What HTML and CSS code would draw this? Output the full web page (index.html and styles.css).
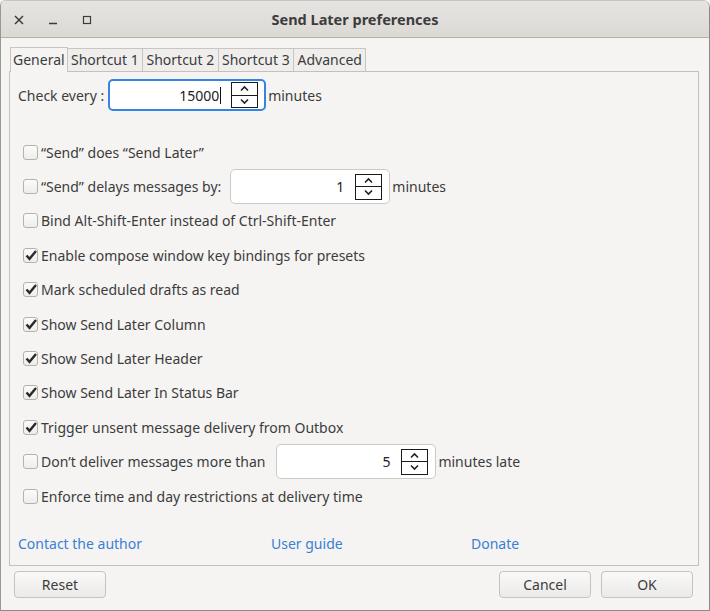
FILE: index.html
```html
<!DOCTYPE html>
<html>
<head>
<meta charset="utf-8">
<link rel="stylesheet" href="styles.css">
</head>
<body>
<div class="window">
  <div class="titlebar">
    <div class="controls">
      <span class="ctl"><svg width="12" height="12" viewBox="0 0 12 12"><path d="M2 2 L10 10 M10 2 L2 10" stroke="#3c3c3c" stroke-width="1.5" fill="none"/></svg></span>
      <span class="ctl"><svg width="12" height="12" viewBox="0 0 12 12"><path d="M2 9.5 H10" stroke="#3c3c3c" stroke-width="1.3" fill="none"/></svg></span>
      <span class="ctl"><svg width="12" height="12" viewBox="0 0 12 12"><rect x="2.5" y="2.5" width="7" height="7" stroke="#3c3c3c" stroke-width="1.2" fill="none"/></svg></span>
    </div>
    <div class="title">Send Later preferences</div>
  </div>
  <div class="body">
    <div class="tabs">
      <div class="tab selected">General</div>
      <div class="tab">Shortcut 1</div>
      <div class="tab">Shortcut 2</div>
      <div class="tab">Shortcut 3</div>
      <div class="tab">Advanced</div>
    </div>
    <div class="panel">
      <div class="check-row">
        <span class="label">Check every :</span>
        <div class="spin focused">
          <span class="value">15000<span class="caret"></span></span>
          <span class="spinbtn"><span class="up"><svg width="11" height="7" viewBox="0 0 11 7"><path d="M2 5.5 L5.5 2 L9 5.5" stroke="#222" stroke-width="1.6" fill="none"/></svg></span><span class="down"><svg width="11" height="7" viewBox="0 0 11 7"><path d="M2 1.5 L5.5 5 L9 1.5" stroke="#222" stroke-width="1.6" fill="none"/></svg></span></span>
        </div>
        <span class="label">minutes</span>
      </div>
      <div class="options">
        <div class="opt"><span class="box"></span><span>“Send” does “Send Later”</span></div>
        <div class="opt"><span class="box"></span><span>“Send” delays messages by:</span>
          <div class="spin small">
            <span class="value">1</span>
            <span class="spinbtn"><span class="up"><svg width="11" height="7" viewBox="0 0 11 7"><path d="M2 5.5 L5.5 2 L9 5.5" stroke="#222" stroke-width="1.6" fill="none"/></svg></span><span class="down"><svg width="11" height="7" viewBox="0 0 11 7"><path d="M2 1.5 L5.5 5 L9 1.5" stroke="#222" stroke-width="1.6" fill="none"/></svg></span></span>
          </div>
          <span>minutes</span>
        </div>
        <div class="opt"><span class="box"></span><span>Bind Alt-Shift-Enter instead of Ctrl-Shift-Enter</span></div>
        <div class="opt"><span class="box checked"><svg width="14" height="13" viewBox="0 0 14 13"><path d="M2.5 6.5 L5.5 9.8 L12 2" stroke="#2a2a2a" stroke-width="2.4" fill="none"/></svg></span><span>Enable compose window key bindings for presets</span></div>
        <div class="opt"><span class="box checked"><svg width="14" height="13" viewBox="0 0 14 13"><path d="M2.5 6.5 L5.5 9.8 L12 2" stroke="#2a2a2a" stroke-width="2.4" fill="none"/></svg></span><span>Mark scheduled drafts as read</span></div>
        <div class="opt"><span class="box checked"><svg width="14" height="13" viewBox="0 0 14 13"><path d="M2.5 6.5 L5.5 9.8 L12 2" stroke="#2a2a2a" stroke-width="2.4" fill="none"/></svg></span><span>Show Send Later Column</span></div>
        <div class="opt"><span class="box checked"><svg width="14" height="13" viewBox="0 0 14 13"><path d="M2.5 6.5 L5.5 9.8 L12 2" stroke="#2a2a2a" stroke-width="2.4" fill="none"/></svg></span><span>Show Send Later Header</span></div>
        <div class="opt"><span class="box checked"><svg width="14" height="13" viewBox="0 0 14 13"><path d="M2.5 6.5 L5.5 9.8 L12 2" stroke="#2a2a2a" stroke-width="2.4" fill="none"/></svg></span><span>Show Send Later In Status Bar</span></div>
        <div class="opt"><span class="box checked"><svg width="14" height="13" viewBox="0 0 14 13"><path d="M2.5 6.5 L5.5 9.8 L12 2" stroke="#2a2a2a" stroke-width="2.4" fill="none"/></svg></span><span>Trigger unsent message delivery from Outbox</span></div>
        <div class="opt"><span class="box"></span><span>Don’t deliver messages more than</span>
          <div class="spin small late">
            <span class="value">5</span>
            <span class="spinbtn"><span class="up"><svg width="11" height="7" viewBox="0 0 11 7"><path d="M2 5.5 L5.5 2 L9 5.5" stroke="#222" stroke-width="1.6" fill="none"/></svg></span><span class="down"><svg width="11" height="7" viewBox="0 0 11 7"><path d="M2 1.5 L5.5 5 L9 1.5" stroke="#222" stroke-width="1.6" fill="none"/></svg></span></span>
          </div>
          <span>minutes late</span>
        </div>
        <div class="opt"><span class="box"></span><span>Enforce time and day restrictions at delivery time</span></div>
      </div>
      <div class="links">
        <a class="link l1">Contact the author</a>
        <a class="link l2">User guide</a>
        <a class="link l3">Donate</a>
      </div>
    </div>
    <div class="buttons">
      <button class="btn">Reset</button>
      <span class="spacer"></span>
      <button class="btn">Cancel</button>
      <button class="btn">OK</button>
    </div>
  </div>
</div>
</body>
</html>
```
FILE: styles.css
```css
* { box-sizing: border-box; }
html, body { margin: 0; padding: 0; background: #f6f5f4; }
body {
  font-family: "Noto Sans", "Open Sans", sans-serif;
  font-size: 14px;
  color: #3c3c3c;
}
.window {
  width: 710px;
  height: 611px;
  background: #f5f4f2;
  border-right: 1px solid #8a8a8a;
  border-bottom: 1px solid #8a8a8a;
  border-left: 1px solid #9a9893;
  border-radius: 6px 8px 0 0;
  overflow: hidden;
  display: flex;
  flex-direction: column;
}
.titlebar {
  height: 38px;
  flex: none;
  background: linear-gradient(#e6e4e1, #dcd9d5);
  border-bottom: 1px solid #b4b1ac;
  border-top: 1px solid #c7c5c1;
  display: flex;
  align-items: center;
  position: relative;
}
.controls {
  display: flex;
  gap: 22px;
  padding-left: 12px;
  padding-top: 1px;
}
.ctl { width: 12px; height: 12px; display: flex; }
.title {
  position: absolute;
  left: 0; right: 0;
  text-align: center;
  font-weight: bold;
  font-size: 14.5px;
  color: #3c3c3c;
  top: 8px;
}
.body {
  flex: 1;
  display: flex;
  flex-direction: column;
  padding: 9px 10px 0 8px;
}
.tabs {
  display: flex;
  padding-left: 1px;
  height: 24px;
  align-items: flex-end;
}
.tab {
  height: 23px;
  padding: 0 3.4px;
  border: 1px solid #c9c6c1;
  border-bottom: none;
  border-left: none;
  background: #efeeec;
  line-height: 21px;
  font-size: 14px;
  color: #3c3c3c;
}
.tab.selected {
  height: 25px;
  border-left: 1px solid #c9c6c1;
  background: #f5f4f2;
  margin-bottom: -1px;
  position: relative;
  z-index: 1;
  padding: 0 2px;
  line-height: 23px;
}
.panel {
  height: 495px;
  border: 1px solid #c4c1bc;
  display: flex;
  flex-direction: column;
  padding: 7px 0 0 8px;
}
.check-row {
  display: flex;
  align-items: center;
  height: 32px;
}
.check-row .label { font-size: 14px; }
.check-row .label:first-child { margin-right: 4px; }
.spin {
  width: 158px;
  height: 32px;
  border: 1px solid #cdc9c4;
  border-radius: 5px;
  background: #fff;
  display: flex;
  align-items: center;
  justify-content: flex-end;
  padding-right: 7px;
  margin-right: 2px;
}
.spin.focused {
  border: 2px solid #3584e4;
  padding-right: 6px;
}
.spin .value {
  font-size: 14px;
  color: #222;
  margin-right: 10px;
  display: flex;
  align-items: center;
}
.caret {
  display: inline-block;
  width: 1px;
  height: 17px;
  background: #111;
  margin-left: 1px;
}
.spin.focused .value { margin-right: 10px; }
.spinbtn {
  width: 27px;
  height: 26px;
  border: 1px solid #1a1a1a;
  display: flex;
  flex-direction: column;
  background: #fff;
}
.spinbtn .up, .spinbtn .down {
  flex: 1;
  display: flex;
  align-items: center;
  justify-content: center;
}
.spinbtn .up { border-bottom: 1px solid #1a1a1a; }
.spin.small {
  width: 160px;
  height: 35px;
  padding-right: 7px;
  margin-left: 9px;
}
.spin.small.late { margin-left: 11px; }
.spin.small .value { margin-right: 11px; }
.options {
  margin-top: 24px;
  display: flex;
  flex-direction: column;
}
.opt {
  height: 34.4px;
  display: flex;
  align-items: center;
  font-size: 14px;
  padding-left: 5px;
}
.box {
  width: 15px;
  height: 15px;
  border: 1px solid #b5b2ad;
  border-radius: 3px;
  background: linear-gradient(#fbfbfa, #eeedeb);
  margin-right: 3px;
  flex: none;
  position: relative;
}
.box svg {
  position: absolute;
  left: 0px;
  top: 0px;
}
.links {
  display: flex;
  margin-top: 21px;
  font-size: 14px;
}
.link { color: #3a7fd6; }
.l1 { width: 253px; }
.l2 { width: 200px; }
.buttons {
  display: flex;
  padding-top: 5px;
  padding-left: 5px;
  gap: 10px;
}
.spacer { flex: 1; }
.btn {
  width: 92px;
  height: 27px;
  border: 1px solid #c6c3be;
  border-radius: 4px;
  background: linear-gradient(#f9f9f8, #eceae7);
  font-family: "Noto Sans", "Open Sans", sans-serif;
  font-size: 14px;
  color: #3c3c3c;
  padding: 0;
}
.buttons .btn:last-child { margin-right: 6px; }
```
